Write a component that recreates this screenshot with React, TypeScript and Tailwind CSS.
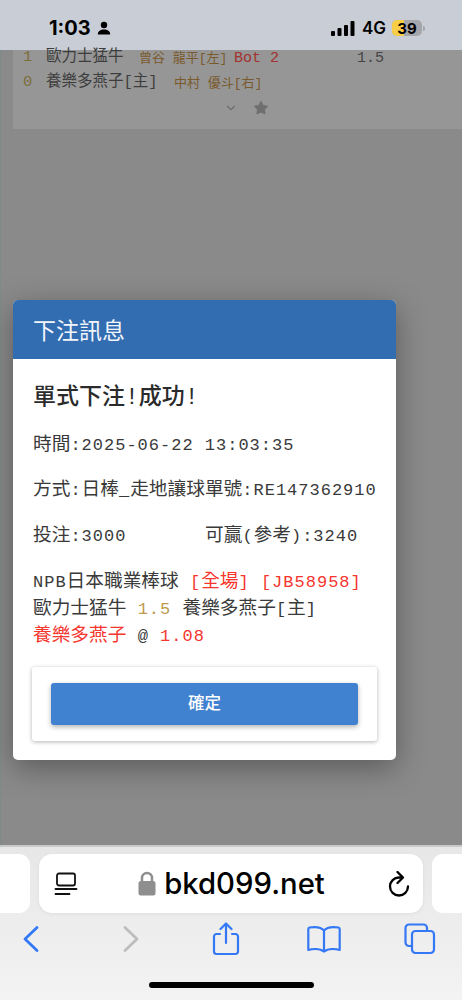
import React from 'react';
import { Star, ChevronDown } from 'lucide-react';

const mono = "font-['Liberation_Mono','Noto_Sans_CJK_TC',monospace]";
const cjk = "font-['Noto_Sans_CJK_TC','Liberation_Sans',sans-serif]";

// latin runs in the dialog: smaller glyphs on a wider advance than the CJK text
const L = ({ children, className = '' }: { children: React.ReactNode; className?: string }) => (
  <span className={`text-[17px] tracking-[1px] ${className}`}>{children}</span>
);

const StatusBar = () => (
  <div className="flex h-[50px] items-center justify-between bg-[#c9ced6] pl-[49px] pr-[37px] pt-[6px] text-black font-['Inter',sans-serif]">
    <div className="flex items-center gap-[6px]">
      <span className="text-[20px] font-bold leading-none">1:03</span>
      <svg width="14" height="14" viewBox="0 0 14 14" fill="#000">
        <circle cx="7" cy="4" r="3.2" />
        <path d="M0.8 13.5c0-3.4 2.6-5 6.2-5s6.200 1.600 6.200 5z" />
      </svg>
    </div>
    <div className="flex items-center gap-[6px]">
      <svg className="mr-[1px]" width="24" height="15" viewBox="0 0 24 15" fill="#000">
        <rect x="0" y="10" width="4" height="5" rx="1" />
        <rect x="6.500" y="7" width="4" height="8" rx="1" />
        <rect x="13" y="4" width="4" height="11" rx="1" />
        <rect x="19.500" y="0" width="4" height="15" rx="1" />
      </svg>
      <span className="text-[17px] font-semibold leading-none">4G</span>
      <div className="flex items-center gap-[1px]">
        <div className="relative flex h-[16px] w-[30px] items-center justify-center overflow-hidden rounded-[5px] bg-[#a4a6ab]">
          <div className="absolute bottom-0 left-0 top-0 w-[12px] bg-[#f7ce46]" />
          <span className="relative text-[15px] font-bold leading-none">39</span>
        </div>
        <div className="h-[5px] w-[2px] rounded-r-sm bg-[#a4a6ab]" />
      </div>
    </div>
  </div>
);

const BackgroundCard = () => (
  <div className={`ml-[13px] h-[79px] bg-[#969696] text-[#444] ${mono}`}>
    <div className="flex h-[15px] items-center pl-[10px] pt-[1px] text-[15.5px] leading-none">
      <span className="w-[23px] text-[#7d6f3c]">1</span>
      <span className="w-[93px] text-[#3d3d3d]">歐力士猛牛</span>
      <span className="w-[95px] text-[13px] text-[#7a5a2c]">曾谷 龍平[左]</span>
      <span className="w-[123px] text-[15px] text-[#a3312f]">Bot 2</span>
      <span className="text-[15px]">1.5</span>
    </div>
    <div className="mt-[7px] flex h-[22px] items-center pl-[10px] text-[15.5px] leading-none">
      <span className="w-[23px] text-[#7d6f3c]">0</span>
      <span className="w-[128px] text-[#3d3d3d]">養樂多燕子[主]</span>
      <span className="text-[13px] text-[#7a5a2c]">中村 優斗[右]</span>
    </div>
    <div className="flex items-center justify-center gap-[15px] pl-[17px] pt-[6px] text-[#6e6e6e]">
      <ChevronDown size={14} strokeWidth={2} />
      <Star size={16} fill="#6e6e6e" strokeWidth={1} />
    </div>
  </div>
);

const Modal = () => (
  <div className="absolute left-[13px] top-[250px] w-[383px] overflow-hidden rounded-[5px] bg-white shadow-[0_8px_30px_rgba(0,0,0,0.35)]">
    <div className={`flex h-[59px] items-center bg-[#326db2] pl-[20px] text-[23px] leading-none text-[#f2f6fb] ${cjk}`}>
      下注訊息
    </div>
    <div className={`px-[20px] pt-[24px] text-[18.7px] text-[#3a3a3a] ${mono}`}>
      <div className="text-[23px] font-medium leading-[30px] text-[#2b2b2b]">單式下注!成功!</div>
      <div className="mt-[19px] leading-[27px]">
        時間<L>:2025-06-22 13:03:35</L>
      </div>
      <div className="mt-[18px] whitespace-nowrap leading-[27px]">
        方式<L>:</L>日棒<L>_</L>走地讓球單號<L>:RE147362910</L>
      </div>
      <div className="mt-[19px] flex leading-[27px]">
        <span className="w-[172px]">
          投注<L>:3000</L>
        </span>
        <span>
          可贏<L>(</L>參考<L>):3240</L>
        </span>
      </div>
      <div className="mt-[19px] leading-[27px]">
        <div className="whitespace-nowrap">
          <L>NPB</L>日本職業棒球<L> </L>
          <span className="text-[#f5352e]">
            <L>[</L>全場<L>] [JB58958]</L>
          </span>
        </div>
        <div className="whitespace-nowrap">
          歐力士猛牛<L> </L>
          <L className="text-[#bd9a4e]">1.5</L>
          <L> </L>養樂多燕子<L>[</L>主<L>]</L>
        </div>
        <div className="whitespace-nowrap">
          <span className="text-[#f5352e]">養樂多燕子</span>
          <L> @ </L>
          <L className="text-[#f5352e]">1.08</L>
        </div>
      </div>
    </div>
    <div className="mx-[19px] mb-[19px] mt-[17px] rounded-[3px] bg-white px-[19px] py-[16px] shadow-[0_1px_4px_rgba(0,0,0,0.3)]">
      <div className={`flex h-[42px] items-center justify-center rounded-[3px] bg-[#4081d0] pb-[3px] text-[16.500px] font-medium leading-none text-white shadow-[0_2px_5px_rgba(0,0,0,0.3)] ${cjk}`}>
        確定
      </div>
    </div>
  </div>
);

const SafariBar = () => (
  <div className="h-[155px] border-t-[2px] border-[#c9c9c9] bg-linear-to-b from-[#e7e7e7] to-[#f3f3f3] font-['Inter',sans-serif]">
    <div className="flex gap-[9px] pt-[7px]">
      <div className="ml-[-20px] h-[59px] w-[50px] shrink-0 rounded-[11px] bg-white" />
      <div className="flex h-[59px] w-[384px] shrink-0 items-center rounded-[13px] bg-white pl-[15px] pr-[12px] shadow-[0_1px_4px_rgba(0,0,0,0.06)]">
        <svg width="24" height="24" viewBox="0 0 24 24" fill="none" stroke="#111" strokeWidth="1.800" strokeLinecap="round">
          <rect x="3" y="1.500" width="18" height="12" rx="2" />
          <path d="M1.500 17h21M1.500 22h14" />
        </svg>
        <div className="flex flex-1 items-center justify-center gap-[8px] pr-[2px]">
          <svg width="18" height="25" viewBox="0 0 18 25" fill="none">
            <path d="M4 11V7a5 5 0 0 1 10 0v4" stroke="#8e8e8e" strokeWidth="2.500" />
            <rect x="0.500" y="10" width="17" height="14.500" rx="2.500" fill="#8e8e8e" />
          </svg>
          <span className="text-[29.300px] font-medium leading-none text-black">bkd099.net</span>
        </div>
        <svg width="24" height="26" viewBox="0 0 24 26" fill="none" stroke="#000" strokeWidth="2.300" strokeLinecap="round" strokeLinejoin="round">
          <path d="M21 15.500A9 9 0 1 1 12 6.500h3" />
          <path d="M10.500 1 16 6.500 10.500 12" />
        </svg>
      </div>
      <div className="h-[59px] w-[50px] shrink-0 rounded-[11px] bg-white" />
    </div>
    <div className="relative flex h-[50px] items-center pt-[2px]">
      <svg className="ml-[22px]" width="18" height="28" viewBox="0 0 18 28" fill="none" stroke="#3478f6" strokeWidth="2.800" strokeLinecap="round" strokeLinejoin="round">
        <path d="M15 2.500 3 14l12 11.500" />
      </svg>
      <svg className="ml-[82px]" width="18" height="28" viewBox="0 0 18 28" fill="none" stroke="#bdbdbd" strokeWidth="2.800" strokeLinecap="round" strokeLinejoin="round">
        <path d="M3 2.500 15 14 3 25.500" />
      </svg>
      <svg className="ml-[72px]" width="28" height="34" viewBox="0 0 28 34" fill="none" stroke="#3478f6" strokeWidth="2.200" strokeLinecap="round" strokeLinejoin="round">
        <path d="M8 12H4.500A2.500 2.500 0 0 0 2 14.500v15A2.500 2.500 0 0 0 4.500 32h19a2.500 2.500 0 0 0 2.500-2.500v-15a2.500 2.500 0 0 0-2.500-2.500H20" />
        <path d="M14 21V2M8.500 7 14 1.500 19.500 7" />
      </svg>
      <svg className="ml-[67px]" width="34" height="28" viewBox="0 0 34 28" fill="none" stroke="#3478f6" strokeWidth="2.200" strokeLinecap="round" strokeLinejoin="round">
        <path d="M17 5.500C14.500 2.500 9 1.500 2.500 2.500c-.8.200-1.200.700-1.200 1.500v21c4.700-1.300 11.700-1.300 15.700 1.500 4-2.800 11-2.800 15.700-1.500V4c0-.8-.4-1.300-1.200-1.500C25 1.500 19.500 2.500 17 5.500zM17 5.500V26" />
      </svg>
      <svg className="ml-[63px]" width="32" height="32" viewBox="0 0 32 32" fill="none" stroke="#3478f6" strokeWidth="2.200" strokeLinejoin="round">
        <rect x="8" y="8" width="22" height="22" rx="3.500" />
        <path d="M8 23H5a3.500 3.500 0 0 1-3.500-3.500V5A3.500 3.500 0 0 1 5 1.500h14.500A3.500 3.500 0 0 1 23 5v3" />
      </svg>
    </div>
    <div className="mx-auto mt-[19px] h-[6px] w-[165px] rounded-full bg-black" />
  </div>
);

const App = () => {
  return (
    <div className="flex h-[1000px] w-[462px] flex-col overflow-hidden bg-[#8a8a8a]">
      <StatusBar />
      <div className="relative flex-1">
        <div className="absolute bottom-0 left-0 top-0 w-[1px] bg-[#7f8b8b]" />
        <BackgroundCard />
        <Modal />
      </div>
      <SafariBar />
    </div>
  );
};

export default App;
